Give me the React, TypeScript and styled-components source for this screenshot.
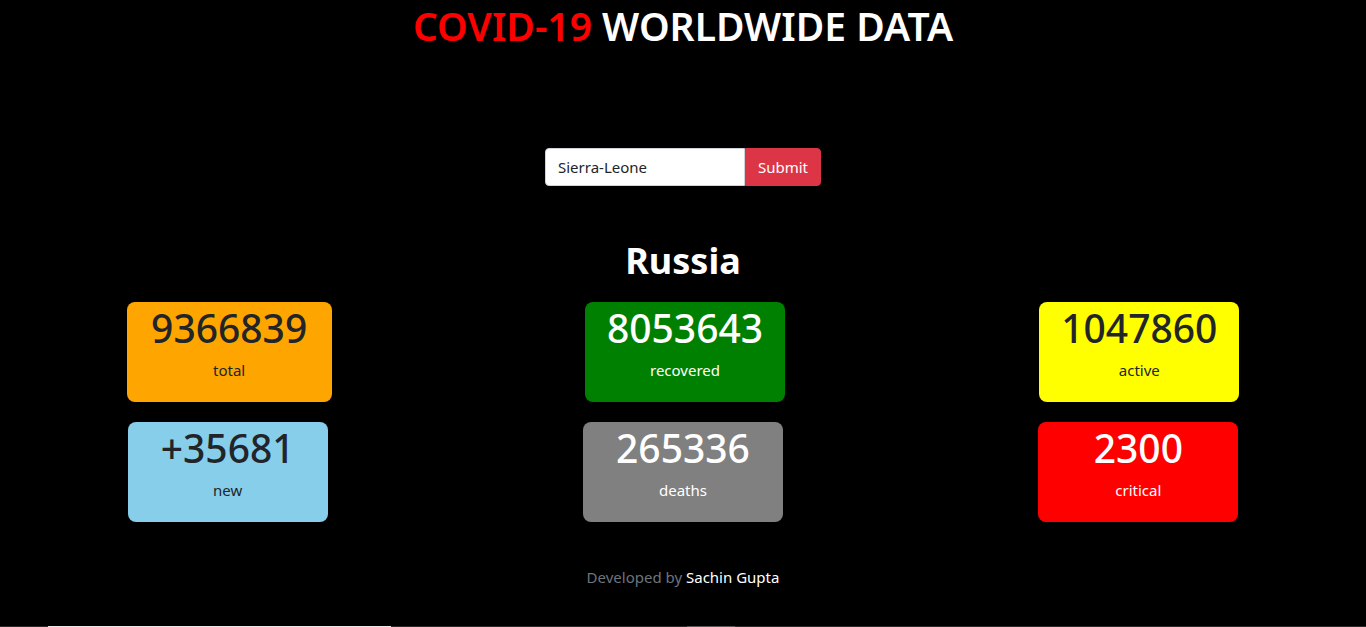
import React from "react";
import styled, { createGlobalStyle } from "styled-components";

const GlobalStyle = createGlobalStyle`
  html, body {
    margin: 0;
    padding: 0;
    background: #000;
    height: 100%;
    overflow: hidden;
  }
  body {
    font-family: "Noto Sans", "Open Sans", sans-serif;
    color: #fff;
  }
  * { box-sizing: border-box; }
`;

const Page = styled.div`
  height: 627px;
  display: flex;
  flex-direction: column;
  background: #000;
`;

const Title = styled.h1`
  margin: 0;
  padding-top: 4px;
  text-align: center;
  font-size: 39px;
  font-weight: 600;
  line-height: 43px;
  color: #fff;
`;

const Red = styled.span`
  color: #ff0000;
`;

const SearchForm = styled.form`
  display: flex;
  justify-content: center;
  margin-top: 101px;
`;

const Input = styled.input`
  width: 200px;
  height: 38px;
  padding: 6px 12px;
  font-family: inherit;
  font-size: 15px;
  color: #212529;
  background: #fff;
  border: 1px solid #ced4da;
  border-radius: 4px 0 0 4px;
  outline: none;
`;

const SubmitButton = styled.button`
  width: 76px;
  height: 38px;
  font-family: inherit;
  font-size: 15px;
  color: #fff;
  background: #dc3545;
  border: 1px solid #dc3545;
  border-radius: 0 4px 4px 0;
`;

const Country = styled.h2`
  margin: 55px 0 0;
  text-align: center;
  font-size: 36px;
  font-weight: 700;
  line-height: 40px;
  color: #fff;
`;

const Grid = styled.div`
  display: grid;
  grid-template-columns: repeat(3, 1fr);
  row-gap: 20px;
  margin-top: 21px;
`;

const Cell = styled.div<{ $shift?: number }>`
  display: flex;
  justify-content: center;
  padding-left: ${(p) => p.$shift ?? 0}px;
`;

const Card = styled.div<{ $bg: string; $fg: string; $w: number }>`
  width: ${(p) => p.$w}px;
  height: 100px;
  border-radius: 8px;
  background: ${(p) => p.$bg};
  color: ${(p) => p.$fg};
  display: flex;
  flex-direction: column;
  align-items: center;
`;

const Number = styled.div`
  font-size: 39px;
  font-weight: 500;
  line-height: 46px;
  margin-top: 3px;
`;

const Label = styled.div`
  font-size: 15px;
  line-height: 20px;
  margin-top: 9px;
`;

const Footer = styled.footer`
  margin-top: 45px;
  text-align: center;
  font-size: 15px;
  line-height: 20px;
  color: #6c757d;
`;

const Author = styled.span`
  color: #fff;
`;

const BottomStrip = styled.div`
  margin-top: auto;
  height: 1px;
  background: #2b2b2b;
  display: flex;
`;

const StripSeg = styled.div<{ $w: number; $c: string }>`
  width: ${(p) => p.$w}px;
  background: ${(p) => p.$c};
`;

const stats = [
  { n: "9366839", l: "total", bg: "#ffa500", fg: "#212529", w: 205, s: 3 },
  { n: "8053643", l: "recovered", bg: "#008000", fg: "#fff", w: 200, s: 4 },
  { n: "1047860", l: "active", bg: "#ffff00", fg: "#212529", w: 200, s: 2 },
  { n: "+35681", l: "new", bg: "#87ceeb", fg: "#212529", w: 200, s: 0 },
  { n: "265336", l: "deaths", bg: "#808080", fg: "#fff", w: 200, s: 0 },
  { n: "2300", l: "critical", bg: "#ff0000", fg: "#fff", w: 200, s: 0 },
];

export default function App() {
  return (
    <Page>
      <GlobalStyle />
      <Title>
        <Red>COVID-19</Red> WORLDWIDE DATA
      </Title>
      <SearchForm onSubmit={(e) => e.preventDefault()}>
        <Input defaultValue="Sierra-Leone" />
        <SubmitButton type="submit">Submit</SubmitButton>
      </SearchForm>
      <Country>Russia</Country>
      <Grid>
        {stats.map((s) => (
          <Cell key={s.l} $shift={s.s}>
            <Card $bg={s.bg} $fg={s.fg} $w={s.w}>
              <Number>{s.n}</Number>
              <Label>{s.l}</Label>
            </Card>
          </Cell>
        ))}
      </Grid>
      <Footer>
        Developed by <Author>Sachin Gupta</Author>
      </Footer>
      <BottomStrip>
        <StripSeg $w={48} $c="#2b2b2b" />
        <StripSeg $w={343} $c="#e8e8e8" />
        <StripSeg $w={296} $c="#2b2b2b" />
        <StripSeg $w={48} $c="#5a5a5a" />
      </BottomStrip>
    </Page>
  );
}
